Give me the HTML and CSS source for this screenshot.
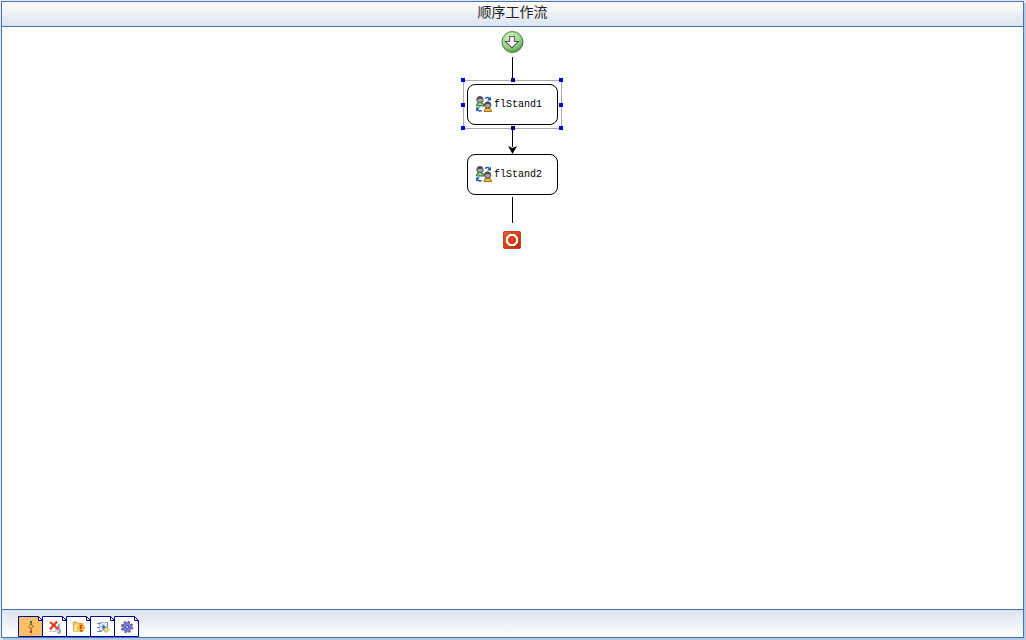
FILE: index.html
```html
<!DOCTYPE html>
<html lang="zh-CN">
<head>
<meta charset="utf-8">
<title>顺序工作流</title>
<link rel="stylesheet" href="styles.css">
</head>
<body>
<svg class="defs" aria-hidden="true">
  <defs>
    <radialGradient id="green" cx="0.4" cy="0.3" r="0.75"><stop offset="0" stop-color="#d8f3c8"/><stop offset="0.6" stop-color="#9ad686"/><stop offset="1" stop-color="#4a9044"/></radialGradient>
    <linearGradient id="red" x1="0" y1="0" x2="1" y2="1"><stop offset="0" stop-color="#d85b3c"/><stop offset="0.5" stop-color="#dc4217"/><stop offset="1" stop-color="#b52a08"/></linearGradient>
    <symbol id="people" viewBox="0 0 16 16">
      <path d="M0.5 9.5Q0.5 6.5 4 6.5T8 9.5V10H0.5Z" fill="#73ce73" stroke="#2c7136"/>
      <path d="M3 7l1 2 1.2-2" fill="#e8f7e2"/>
      <circle cx="4" cy="3.7" r="3.2" fill="#a5a5a5" stroke="#4b4b4b"/>
      <path d="M.8 4Q1 .4 4.5 .6l2.5 2.2L3 2.7Z" fill="#4b4b4b"/>
      <path d="M8 15.5Q8 12 11.8 12T15.5 15.5Z" fill="#f5bf3c" stroke="#a66b0c"/>
      <circle cx="11.7" cy="9" r="3.2" fill="#a5a5a5" stroke="#4b4b4b"/>
      <path d="M8.5 9.3Q9 5.8 12.5 6l2.2 2.5-3.7-.5Z" fill="#4b4b4b"/>
      <path d="M9 2.5Q11.5 .5 13.5 2.7M6 14.5Q3.5 16 1.5 13.7" fill="none" stroke="#1b58b5" stroke-width="1.4"/>
      <path d="M15 .5v4h-4ZM0 15.5v-4h4Z" fill="#1b58b5"/>
    </symbol>
    <symbol id="tab" viewBox="0 0 25 21">
      <path d="M.5 .5h20l4 4v16H.5Z" stroke="#000094"/>
      <path d="M20.5 .5v4h4Z" fill="#fff" stroke="#000094"/>
    </symbol>
  </defs>
</svg>
<main class="designer">
  <header class="title">顺序工作流</header>
  <section class="canvas" aria-label="顺序工作流">
    <svg class="start" viewBox="0 0 23 23" role="img" aria-label="开始">
      <circle cx="11.5" cy="11" r="10.5" fill="url(#green)" stroke="#49834b"/>
      <path d="M8.5 5.5h5v5h4l-6.5 6.5-6.5-6.5h4Z" fill="#fff" stroke="#5b5366" stroke-width="1.1"/>
    </svg>
    <div class="line first"></div>
    <div class="selection">
      <button class="node" type="button"><svg class="people"><use href="#people"/></svg>flStand1</button>
      <i class="handle top left"></i><i class="handle top mid"></i><i class="handle top right"></i>
      <i class="handle center left"></i><i class="handle center right"></i>
      <i class="handle bottom left"></i><i class="handle bottom mid"></i><i class="handle bottom right"></i>
    </div>
    <svg class="arrow" viewBox="0 0 9 25" aria-hidden="true"><path d="M4 0h1v18H4Z"/><path d="M0 17l4.5 2L9 17l-4.5 8Z"/></svg>
    <button class="node" type="button"><svg class="people"><use href="#people"/></svg>flStand2</button>
    <div class="line last"></div>
    <svg class="stop" viewBox="0 0 19 18" role="img" aria-label="结束">
      <rect x="0.5" y="0.5" width="17" height="17" rx="1" fill="url(#red)" stroke="#b5482b"/>
      <path d="M6.8 4h4.4L14 6.8v4.4L11.2 14H6.8L4 11.2V6.8Z" fill="none" stroke="#fff" stroke-width="2"/>
    </svg>
  </section>
  <footer class="toolbar">
    <button class="tab active" type="button" aria-label="流程">
      <svg class="shape"><use href="#tab"/></svg>
      <svg class="icon" viewBox="0 0 16 16"><path d="M8 4v9" stroke="#85764d"/><path d="M7 2h2v2.5H7Z" fill="#39703f"/><path d="M8 5 10.5 7.5 8 10 5.5 7.5Z" fill="#eeb443" stroke="#8c691e"/><path d="M7 11.5h2V14H7Z" fill="#bd3024"/></svg>
    </button>
    <button class="tab" type="button" aria-label="取消">
      <svg class="shape"><use href="#tab"/></svg>
      <svg class="icon" viewBox="0 0 16 16"><path d="M8 10l4-5 1.5 5v3.5L8 12Z" fill="#c3cad9"/><path d="M12 5v6M13 11v3h-3" stroke="#69748c"/><path d="M3 3l8 7M10 2.5 3 10.5" stroke="#e8351f" stroke-width="2.2"/><path d="M2 12.5h7" stroke="#c1c4cb"/></svg>
    </button>
    <button class="tab" type="button" aria-label="异常">
      <svg class="shape"><use href="#tab"/></svg>
      <svg class="icon" viewBox="0 0 16 16"><path d="M2 3h4l1 1.5h5v8H3Z" fill="#f2cd67" stroke="#c6a64e"/><path d="M3 6h9l-1 6.5H3Z" fill="#ffe38e"/><path d="M10 4.5 14 8.5 10 13 6.5 8.5Z" fill="#f8bd31" stroke="#d99a2c"/><path d="M10 6v4M10 11v1.5" stroke="#d42e18" stroke-width="1.6"/></svg>
    </button>
    <button class="tab" type="button" aria-label="事件">
      <svg class="shape"><use href="#tab"/></svg>
      <svg class="icon" viewBox="0 0 16 16"><path d="M4.5 3.5h8v8h-8Z" fill="#e7f0ff" stroke="#9cb5de"/><path d="M2 4.5h4M2 8.5h3M2 12.5h5M12.5 3v6" stroke="#5f86c4"/><path d="M5.5 7.5h2V5L11 8l-3.5 3V8.5Z" fill="#426cad"/><path d="M11.5 8 14 10.5 11 13.5 8.5 11Z" fill="#ffe783" stroke="#b39b28"/></svg>
    </button>
    <button class="tab" type="button" aria-label="设置">
      <svg class="shape"><use href="#tab"/></svg>
      <svg class="icon" viewBox="0 0 16 16"><circle cx="8" cy="8" r="5.2" stroke="#6563b6" stroke-width="2" stroke-dasharray="2.4 1.68"/><circle cx="8" cy="8" r="4.3" fill="#7f7dd3" stroke="#6765bd"/><circle cx="8" cy="8" r="1.5" fill="#e1e1fa" stroke="#4b4996"/></svg>
    </button>
  </footer>
</main>
</body>
</html>
```
FILE: styles.css
```css
* { box-sizing: border-box; }
body {
  margin: 0;
  min-height: 100vh;
  padding: 1px 2px 2px 1px;
  display: flex;
  background: #e6e9f0;
}
.defs { position: absolute; width: 0; height: 0; }
.designer {
  flex: 1;
  display: flex;
  flex-direction: column;
  border: 1px solid #4474b5;
  background: #fff;
  box-shadow: 2px 2px 1px #b5c9e2;
}
.title {
  height: 25px;
  border-bottom: 1px solid #4474b5;
  background: linear-gradient(#fff, #dce4f0);
  font: 14px/18px "Noto Sans CJK SC", sans-serif;
  text-align: center;
  color: #222;
}
.canvas {
  flex: 1;
  display: flex;
  flex-direction: column;
  align-items: center;
  padding-top: 4px;
}
.start { width: 23px; height: 23px; }
.line { width: 1px; height: 26px; background: #000; }
.first { height: 24px; margin-top: 3px; }
.last { margin-top: 2px; }
.selection {
  position: relative;
  margin-top: -1px;
  padding: 3px;
  border: 1px solid #aaa;
}
.node {
  display: flex;
  align-items: center;
  gap: 2px;
  width: 91px;
  height: 41px;
  padding: 0 0 1px 8px;
  border: 1px solid #000;
  border-radius: 8px;
  background: #fff;
  color: #000;
  font: 10px "Liberation Mono", monospace;
}
.people { flex: none; width: 16px; height: 16px; }
.handle { position: absolute; width: 4px; height: 4px; background: #0000e0; }
.top { top: -3px; }
.center { top: 22px; }
.bottom { bottom: -2px; }
.left { left: -3px; }
.mid { left: 47px; background: #000080; }
.right { right: -2px; }
.arrow { width: 9px; height: 25px; }
.stop { width: 19px; height: 18px; margin-top: 8px; }
.toolbar {
  display: flex;
  align-items: flex-start;
  height: 28px;
  padding: 6px 16px 0;
  border-top: 1px solid #4474b5;
  background: linear-gradient(#dce4f0, #fff);
}
.tab {
  display: grid;
  place-items: center;
  width: 25px;
  height: 21px;
  margin-right: -1px;
  padding: 0;
  border: 0;
  background: none;
}
.shape, .icon { grid-area: 1 / 1; }
.shape { width: 25px; height: 21px; fill: #fff; }
.active .shape { fill: #ffc069; }
.icon { width: 16px; height: 16px; fill: none; }
```
